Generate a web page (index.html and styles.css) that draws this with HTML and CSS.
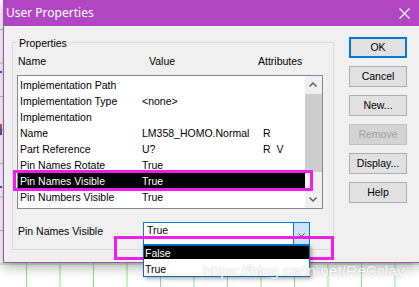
FILE: index.html
```html
<!DOCTYPE html>
<html>
<head>
<meta charset="utf-8">
<title>User Properties</title>
<link rel="stylesheet" href="styles.css">
</head>
<body>
<span class="pin pin-a"></span>
<span class="pin pin-b"></span>
<span class="pin pin-c"></span>
<div class="dialog">
  <div class="titlebar">
    <span class="title">User Properties</span>
    <svg class="close" width="11" height="11" viewBox="0 0 11 11"><path d="M0.5 0.5 L10.5 10.5 M10.5 0.5 L0.5 10.5" stroke="#fff" stroke-width="1.1" fill="none"/></svg>
  </div>
  <div class="client">
    <div class="group">
      <span class="legend">Properties</span>
      <div class="head"><span>Name</span><span>Value</span><span>Attributes</span></div>
      <div class="list">
        <div class="rows">
          <div class="row"><span>Implementation Path</span><span></span><span></span></div>
          <div class="row"><span>Implementation Type</span><span>&lt;none&gt;</span><span></span></div>
          <div class="row"><span>Implementation</span><span></span><span></span></div>
          <div class="row"><span>Name</span><span>LM358_HOMO.Normal</span><span>R</span></div>
          <div class="row"><span>Part Reference</span><span>U?</span><span>R  V</span></div>
          <div class="row"><span>Pin Names Rotate</span><span>True</span><span></span></div>
          <div class="row sel"><span>Pin Names Visible</span><span>True</span><span></span></div>
          <div class="row"><span>Pin Numbers Visible</span><span>True</span><span></span></div>
        </div>
        <div class="sb">
          <svg class="sb-btn" width="17" height="17" viewBox="0 0 17 17"><polyline points="4.5,10.5 8,7 11.5,10.5" fill="none" stroke="#606060" stroke-width="1.5"/></svg>
          <div class="sb-track"><div class="sb-thumb"></div></div>
          <svg class="sb-btn" width="17" height="17" viewBox="0 0 17 17"><polyline points="4.5,6.5 8,10 11.5,6.5" fill="none" stroke="#606060" stroke-width="1.5"/></svg>
        </div>
      </div>
      <div class="field">
        <span class="label">Pin Names Visible</span>
        <div class="combo">
          <span class="combo-text">True</span>
          <span class="combo-btn"><svg width="15" height="21" viewBox="0 0 15 21"><polyline points="4.5,10.5 7.5,13.5 10.5,10.5" fill="none" stroke="#505050" stroke-width="1"/></svg></span>
        </div>
      </div>
    </div>
    <div class="buttons">
      <div class="btn default">OK</div>
      <div class="btn">Cancel</div>
      <div class="btn">New...</div>
      <div class="btn disabled">Remove</div>
      <div class="btn">Display...</div>
      <div class="btn">Help</div>
    </div>
  </div>
</div>
<div class="mark mark-2"></div>
<div class="dropdown">
  <div class="dd-item dd-sel">False</div>
  <div class="dd-item dd-plain">True</div>
</div>
<div class="mark mark-1"></div>
<div class="watermark">https://blog.csdn.net/ReCclay</div>
</body>
</html>
```
FILE: styles.css
```css
* { box-sizing: border-box; }
body {
  margin: 0;
  width: 419px;
  height: 287px;
  overflow: hidden;
  position: relative;
  background-color: #fff;
  background-image: linear-gradient(90deg, #7ded7d 1px, transparent 1px), linear-gradient(180deg, #7ded7d 1px, transparent 1px);
  background-size: 33.5px 33.5px;
  background-position: 26px 29px;
  font-family: "Liberation Sans", Arial, sans-serif;
  font-size: 10.5px;
  color: #000;
}
.pin { position: absolute; left: 0; width: 2px; }
.pin-a { top: 71px; height: 2px; background: #3355dd; }
.pin-b { top: 124px; height: 11px; background: linear-gradient(#d86a2c, #2b4fc0); }
.pin-c { top: 186px; height: 2px; background: #3355dd; }

.dialog {
  position: absolute;
  left: 3px;
  top: 0;
  width: 416px;
  height: 263px;
  border-left: 1px solid #b146c2;
  border-bottom: 1px solid #b146c2;
  background: #f0f0f0;
  box-shadow: 0 4px 12px rgba(0,0,0,0.32);
}
.titlebar {
  height: 26px;
  background: #b146c2;
  display: flex;
  align-items: center;
  justify-content: space-between;
  padding: 0 9px 0 2px;
}
.title {
  font-family: "Noto Sans", sans-serif;
  font-size: 12px;
  line-height: 26px;
  color: #fff;
}
.close { margin-top: 1px; }
.client {
  display: flex;
  align-items: flex-start;
  padding: 11px 0 0 8px;
}
.group {
  position: relative;
  margin-top: 5px;
  width: 322px;
  height: 208px;
  border: 1px solid #dcdcdc;
  padding: 12px 0 4px 0;
}
.legend {
  position: absolute;
  left: 4px;
  top: -6px;
  padding: 0 2px;
  background: #f0f0f0;
  line-height: 13px;
}
.head {
  display: grid;
  grid-template-columns: 131px 109px auto;
  padding-left: 5px;
  height: 13px;
  line-height: 13px;
}
.list {
  margin: 7px 0 0 4px;
  width: 306px;
  height: 134px;
  border: 1px solid #828790;
  background: #fff;
  display: flex;
}
.rows { flex: 1; }
.row {
  height: 16px;
  line-height: 18px;
  display: grid;
  grid-template-columns: 122px 121px auto;
  padding-left: 2px;
  white-space: pre;
}
.row.sel { background: #000; color: #fff; }
.sb {
  width: 17px;
  display: flex;
  flex-direction: column;
  background: #f0f0f0;
}
.sb-btn { display: block; flex: none; }
.sb-track { flex: 1; padding-top: 1px; }
.sb-thumb { height: 78px; background: #cdcdcd; }
.field {
  display: flex;
  margin-top: 13px;
  height: 23px;
}
.label {
  width: 130px;
  padding: 1px 0 0 5px;
  line-height: 16px;
}
.combo {
  width: 167px;
  height: 23px;
  border: 1px solid #0078d7;
  background: #fff;
  display: flex;
  justify-content: space-between;
}
.combo-text { padding-left: 3px; line-height: 15px; }
.combo-btn {
  width: 17px;
  height: 23px;
  margin: -1px -1px -1px 0;
  border: 1px solid #0078d7;
  background: #cce4f7;
}
.combo-btn svg { display: block; }
.buttons {
  display: flex;
  flex-direction: column;
  gap: 8px;
  margin-left: 15px;
}
.btn {
  width: 58px;
  height: 21px;
  border: 1px solid #adadad;
  background: #e1e1e1;
  display: flex;
  align-items: center;
  justify-content: center;
  line-height: 13px;
}
.btn.default { border: 2px solid #0078d7; }
.btn.disabled { color: #a0a0a0; border-color: #bfbfbf; background: #d4d4d4; }

.dropdown {
  position: absolute;
  left: 143px;
  top: 245px;
  width: 167px;
  height: 32px;
  border: 1px solid #1464b4;
  background: #fff;
  box-shadow: 2px 2px 4px rgba(0,0,0,0.3);
}
.dd-item { padding-left: 1px; }
.dd-sel { height: 13px; line-height: 14px; background: #000; color: #fff; }
.dd-plain { height: 17px; padding-top: 2px; line-height: 16px; }

.mark { position: absolute; border: 3px solid #f01ee8; }
.mark-1 { left: 13px; top: 170px; width: 300px; height: 21px; }
.mark-2 { left: 114px; top: 236px; width: 220px; height: 24px; }

.watermark {
  position: absolute;
  left: 203px;
  top: 262px;
  font-family: "Liberation Sans", Arial, sans-serif;
  font-size: 15.5px;
  line-height: 17px;
  color: #fff;
  text-shadow: 0 0 1.5px rgba(0,0,0,0.3);
  white-space: nowrap;
}
```
